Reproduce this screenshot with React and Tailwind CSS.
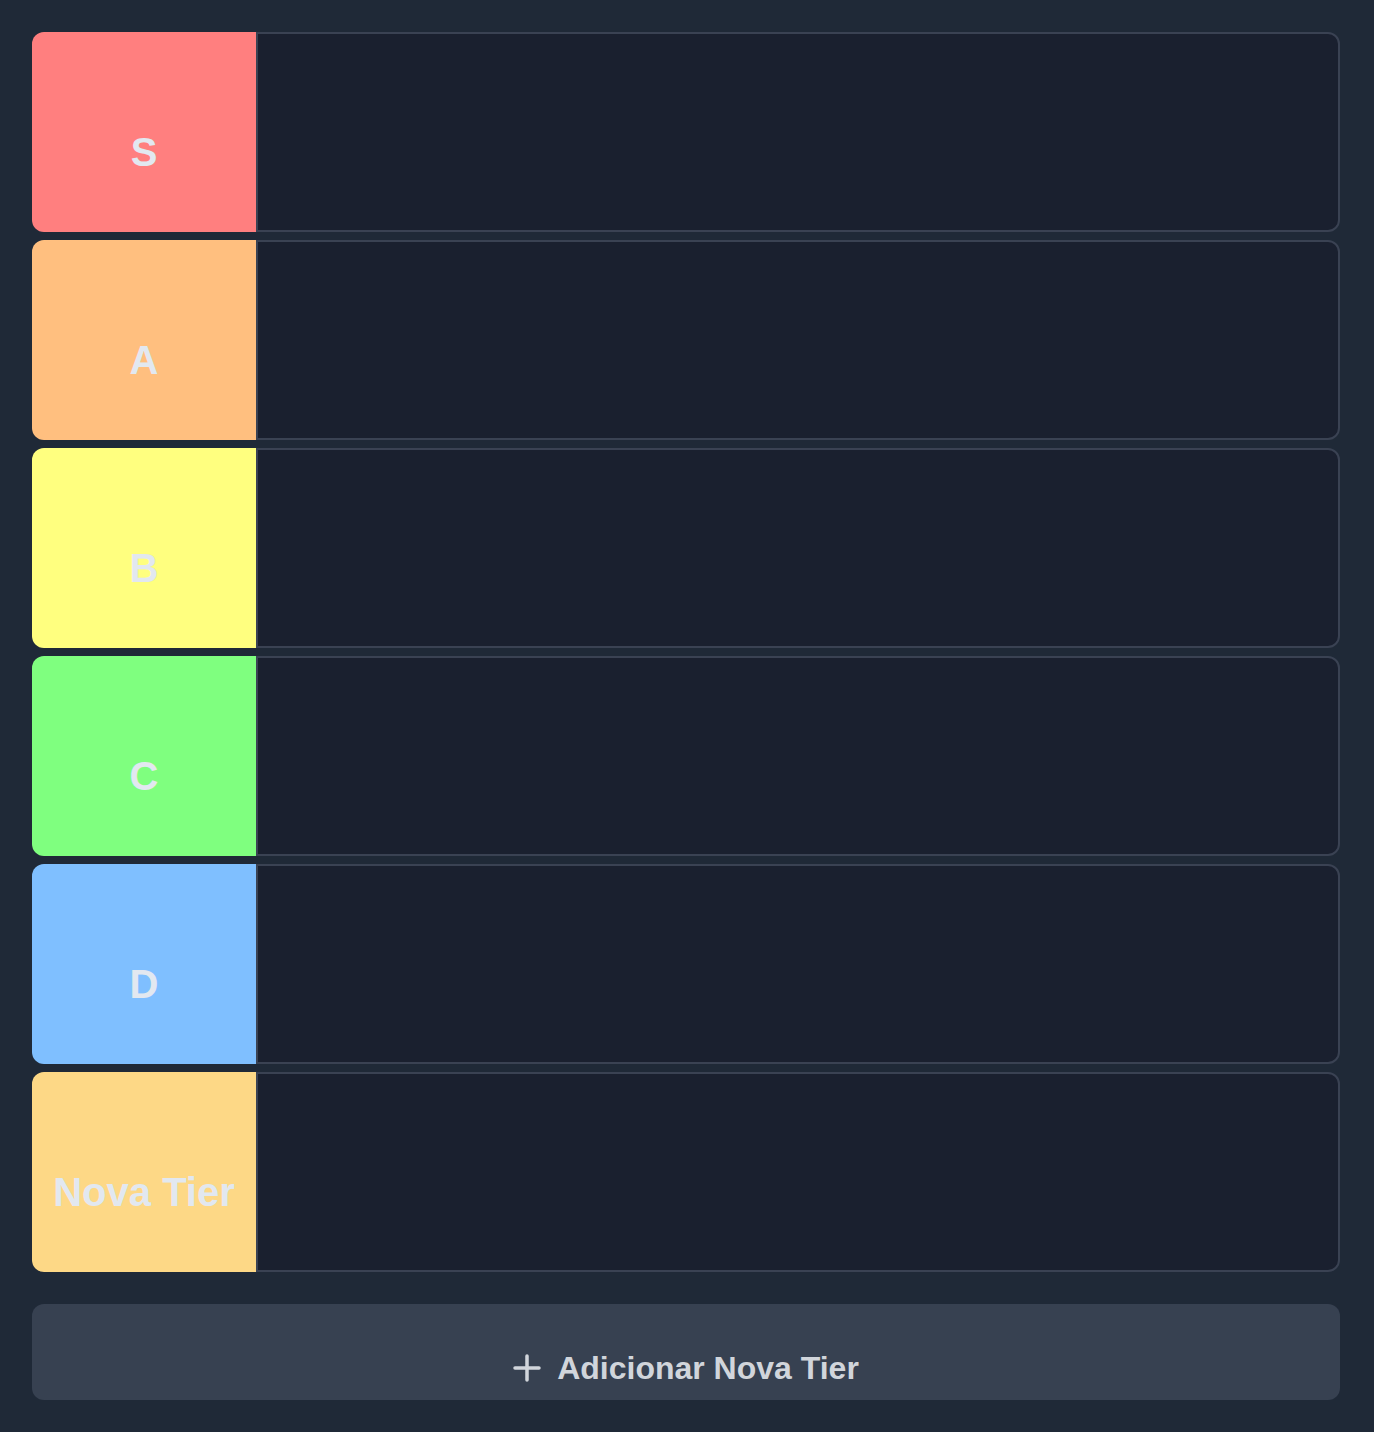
import React from 'react';

const tiers = [
    {label: 'S', color: 'bg-[#ff7f7f]'},
    {label: 'A', color: 'bg-[#ffbf7f]'},
    {label: 'B', color: 'bg-[#ffff7f]'},
    {label: 'C', color: 'bg-[#7fff7f]'},
    {label: 'D', color: 'bg-[#7fbfff]'},
    {label: 'Nova Tier', color: 'bg-[#fdd886]'},
];

const TierRow = ({label, color}) => {
    return (
        <div className="flex h-[200px]">
            <div className={`${color} w-[224px] shrink-0 rounded-l-xl flex items-center justify-center pt-10`}>
                <span className="text-[40px] font-bold text-[#e2e8f0] leading-none">{label}</span>
            </div>
            <div className="flex-1 bg-[#1a202f] border-2 border-[#3a4253] rounded-r-xl"></div>
        </div>
    );
};

const App = () => {
    return (
        <div className="min-h-screen bg-[#1f2937] pt-8 pb-8 pl-8 pr-[34px]" style={{fontFamily: '"Liberation Sans", Arial, sans-serif'}}>
            <div className="flex flex-col gap-2">
                {tiers.map((t) => (
                    <TierRow key={t.label} label={t.label} color={t.color}/>
                ))}
            </div>
            <button type="button"
                    className="mt-8 w-full h-24 bg-[#374151] rounded-xl flex items-center justify-center gap-4 pt-8 text-[#d1d5db]">
                <svg width="28" height="28" viewBox="0 0 28 28" fill="none" stroke="currentColor" strokeWidth="3.5" strokeLinecap="round">
                    <path d="M14 2v24M2 14h24"/>
                </svg>
                <span className="text-[32px] font-bold leading-none">Adicionar Nova Tier</span>
            </button>
        </div>
    );
};

export default App;
